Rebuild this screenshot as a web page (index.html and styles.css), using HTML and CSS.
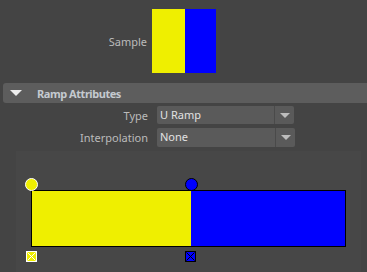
FILE: index.html
```html
<!DOCTYPE html>
<html lang="en">
<head>
  <meta charset="UTF-8" />
  <title>Ramp Attributes</title>
  <link rel="stylesheet" href="styles.css">
</head>
<body>

<div class="sample-row">
  <span class="label">Sample</span>
  <div class="swatch">
    <div class="swatch-yellow"></div>
    <div class="swatch-blue"></div>
  </div>
</div>

<div class="frame-header">
  <span class="arrow"></span>
  <span class="frame-title">Ramp Attributes</span>
</div>

<div class="attr-row">
  <span class="label">Type</span>
  <div class="dropdown">
    <span class="dropdown-text">U Ramp</span>
    <span class="dropdown-btn"><span class="caret"></span></span>
  </div>
</div>

<div class="attr-row">
  <span class="label">Interpolation</span>
  <div class="dropdown">
    <span class="dropdown-text">None</span>
    <span class="dropdown-btn"><span class="caret"></span></span>
  </div>
</div>

<div class="ramp-panel">
  <div class="ramp">
    <div class="ramp-bar">
      <div class="ramp-yellow"></div>
      <div class="ramp-blue"></div>
    </div>
    <!-- color entry handles -->
    <span class="handle handle-yellow" style="left: -6px"></span>
    <span class="handle handle-blue" style="left: 154px"></span>
    <svg class="marker" style="left: -5px" width="11" height="11" viewBox="0 0 11 11">
      <rect x="0.5" y="0.5" width="10" height="10" fill="#efef00" stroke="#ffffff" />
      <path d="M1.5 1.5 L9.5 9.5 M9.5 1.5 L1.5 9.5" stroke="#ffffff" stroke-width="1" />
    </svg>
    <svg class="marker" style="left: 154px" width="11" height="11" viewBox="0 0 11 11">
      <rect x="0.5" y="0.5" width="10" height="10" fill="#0000ff" stroke="#000000" />
      <path d="M1.5 1.5 L9.5 9.5 M9.5 1.5 L1.5 9.5" stroke="#000000" stroke-width="1" />
    </svg>
  </div>
</div>

</body>
</html>
```

FILE: styles.css
```css
body {
  margin: 0;
  background: #444444;
  font-family: "Noto Sans", sans-serif;
  font-size: 11px;
  color: #bbbbbb;
  overflow: hidden;
}
.sample-row {
  display: flex;
  align-items: center;
  padding-top: 9px;
}
.sample-row .label {
  width: 147px;
  text-align: right;
}
.swatch {
  display: flex;
  margin-left: 5px;
  height: 64px;
}
.swatch-yellow {
  width: 33px;
  background: #efef00;
}
.swatch-blue {
  width: 31px;
  background: #0000ff;
}
.frame-header {
  display: flex;
  align-items: center;
  margin: 10px 0 0 3px;
  height: 20px;
  background: #5d5d5d;
  border-radius: 3px 0 0 3px;
}
.arrow {
  width: 0;
  height: 0;
  margin-left: 7px;
  border-left: 6px solid transparent;
  border-right: 6px solid transparent;
  border-top: 6px solid #eeeeee;
}
.frame-title {
  margin-left: 15px;
  font-weight: bold;
  letter-spacing: -0.45px;
  color: #c5cad0;
}
.attr-row {
  display: flex;
  align-items: center;
  margin-top: 3px;
}
.attr-row + .attr-row {
  margin-top: 4px;
}
.attr-row .label {
  width: 148px;
  text-align: right;
}
.dropdown {
  display: flex;
  margin-left: 9px;
  width: 137px;
  height: 18px;
  background: #5a5a5a;
  border-radius: 2px;
}
.attr-row + .attr-row .dropdown {
  height: 19px;
  width: 138px;
}
.dropdown-text {
  flex: 1;
  padding-left: 3px;
  line-height: 18px;
  color: #e2e2e2;
}
.dropdown-btn {
  display: flex;
  align-items: center;
  justify-content: center;
  width: 19px;
  border-left: 1px solid #4a4a4a;
}
.caret {
  width: 0;
  height: 0;
  border-left: 5px solid transparent;
  border-right: 5px solid transparent;
  border-top: 5px solid #bdbdbd;
}
.ramp-panel {
  margin: 4px 6px 0 16px;
  height: 82px;
  padding: 39px 0 0 15px;
  background: #474747;
}
.ramp {
  position: relative;
  width: 315px;
}
.ramp-bar {
  display: flex;
  height: 55px;
  border: 1px solid #000000;
}
.ramp-yellow {
  width: 159px;
  background: #efef00;
}
.ramp-blue {
  flex: 1;
  background: #0000ff;
}
.handle {
  position: absolute;
  top: -12px;
  width: 11px;
  height: 11px;
  border-radius: 50%;
}
.handle-yellow {
  background: #efef00;
  border: 1px solid #ffffff;
}
.handle-blue {
  background: #0000ff;
  border: 1px solid #000000;
}
.marker {
  position: absolute;
  top: 61px;
}
```
